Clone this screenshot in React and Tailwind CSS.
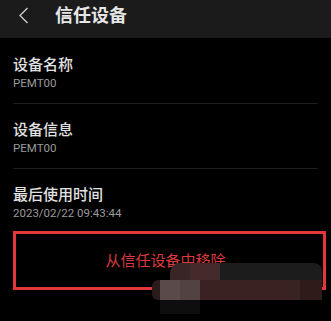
import React from "react";

const cjk = { fontFamily: 'Roboto, "Noto Sans CJK SC", sans-serif' };

function Item({ title, sub, first, last }) {
  return (
    <div
      className={`${first ? "pt-[17px]" : "pt-[16px]"} ${last ? "" : "pb-[13px] border-b border-[#1f1f1f]"}`}
    >
      <div className="text-[15px] leading-[20px] text-[#e2e2e2] font-medium">{title}</div>
      <div className="mt-[1px] text-[11.5px] leading-[14px] text-[#9a9a9a]">{sub}</div>
    </div>
  );
}

function Blur() {
  return (
    <div className="absolute left-[152px] top-[263px] w-[170px] flex flex-col">
      <div className="flex h-[17px]">
        <div className="w-[18px]" />
        <div className="w-[20px] bg-[#3a2526] rounded-tl-[10px]" />
        <div className="w-[30px] bg-[#442a2b]" />
        <div className="w-[102px] bg-[#1c1c1c] rounded-tr-[8px]" />
      </div>
      <div className="flex h-[20px]">
        <div className="w-[8px] bg-[#2a1a1a] rounded-l-[6px]" />
        <div className="w-[20px] bg-[#5a4a4a]" />
        <div className="w-[20px] bg-[#524242]" />
        <div className="w-[100px] bg-[#3b2222]" />
        <div className="w-[22px] bg-[#301b1b]" />
      </div>
      <div className="flex h-[14px]">
        <div className="w-[8px]" />
        <div className="w-[40px] bg-[#0e0e0e]" />
      </div>
    </div>
  );
}

export default function App() {
  return (
    <div className="relative w-[331px] h-[321px] bg-black overflow-hidden" style={cjk}>
      <div className="h-[38px] bg-[#1b1b1b] flex items-center pb-[7px]">
        <svg className="ml-[18px]" width="11" height="17" viewBox="0 0 11 17" fill="none">
          <path d="M9.5 1L2 8.5L9.5 16" stroke="#cfcfcf" strokeWidth="1.3" />
        </svg>
        <div className="ml-[26px] text-[18px] leading-[24px] font-bold text-[#e6e6e6]">信任设备</div>
      </div>
      <div className="px-[13px]">
        <Item title="设备名称" sub="PEMT00" first />
        <Item title="设备信息" sub="PEMT00" />
        <Item title="最后使用时间" sub="2023/02/22 09:43:44" last />
      </div>
      <div className="mt-[11px] ml-[13px] mr-[5px] h-[59px] border-[3px] border-[#e2363b] flex items-center justify-center">
        <span className="text-[15px] leading-[20px] text-[#dd3a3e] mr-[8px]">从信任设备中移除</span>
      </div>
      <Blur />
    </div>
  );
}
